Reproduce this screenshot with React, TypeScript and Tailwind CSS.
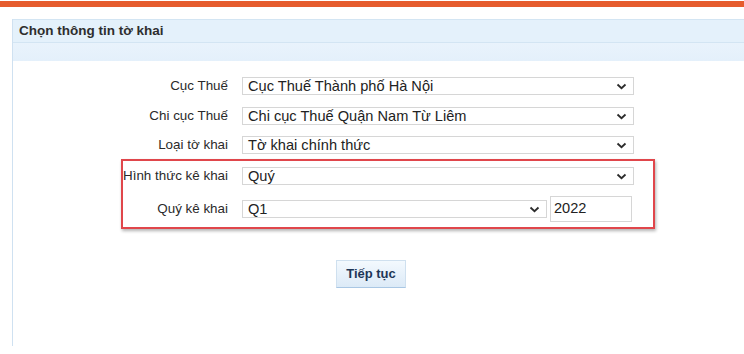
// Tax declaration info picker

function Chevron() {
  return (
    <svg width="11" height="7" viewBox="0 0 11 7" className="shrink-0">
      <polyline points="1.5,1.5 5.5,5.2 9.5,1.5" fill="none" stroke="#2b2b2b" strokeWidth="1.8" />
    </svg>
  );
}

function FakeSelect({ value, width }: { value: string; width: string }) {
  return (
    <div
      className={`${width} h-[18px] flex items-center justify-between pl-[5px] pr-[6px] bg-white border border-[#d6d6d6] text-[14.6px] leading-none text-[#222]`}
    >
      <span>{value}</span>
      <Chevron />
    </div>
  );
}

function Row({ label, children, h = "h-[30px]", labelW = "w-[107px]" }: { label: string; children: React.ReactNode; h?: string; labelW?: string }) {
  return (
    <div className={`flex items-center ${h}`}>
      <div className={`${labelW} text-right text-[13.4px] text-[#2a2a2a] shrink-0 whitespace-nowrap`}>{label}</div>
      <div className="ml-[14px] flex items-center gap-[3px]">{children}</div>
    </div>
  );
}

export default function App() {
  return (
    <div className="w-[744px] h-[354px] bg-white overflow-hidden" style={{ fontFamily: '"Liberation Sans", Arial, sans-serif' }}>
      {/* Top accent bar */}
      <div className="mt-[1px] h-[6px] bg-[#e65c2d]"></div>

      <div className="mt-[12px] ml-[12px] h-[327px] border-l border-[#cfe1f1]">
        {/* Header */}
        <div className="h-[24px] flex items-center pl-[6px] bg-[#e4f1fb] border-t border-b border-[#d3e5f3]">
          <span className="text-[13.5px] font-bold text-[#2e2e2e]">Chọn thông tin tờ khai</span>
        </div>
        <div className="h-[18px] bg-gradient-to-b from-[#e9f3fc] to-[#e4f0fb]"></div>

        {/* Form */}
        <div className="mt-[10px] ml-[108px] w-[534px]">
          <Row label="Cục Thuế">
            <FakeSelect value="Cục Thuế Thành phố Hà Nội" width="w-[392px]" />
          </Row>
          <Row label="Chi cục Thuế">
            <FakeSelect value="Chi cục Thuế Quận Nam Từ Liêm" width="w-[392px]" />
          </Row>
          <Row label="Loại tờ khai" h="h-[28px]">
            <FakeSelect value="Tờ khai chính thức" width="w-[392px]" />
          </Row>

          {/* Highlighted group */}
          <div className="border-2 border-[#e0464b] shadow-[1px_2px_3px_rgba(0,0,0,0.3)]">
            <Row label="Hình thức kê khai" labelW="w-[105px]">
              <FakeSelect value="Quý" width="w-[392px]" />
            </Row>
            <Row label="Quý kê khai" h="h-[36px]" labelW="w-[105px]">
              <FakeSelect value="Q1" width="w-[305px]" />
              <div className="w-[82px] h-[26px] flex items-center pl-[3px] border border-[#d6d6d6] bg-white text-[14.6px] text-[#222]">2022</div>
            </Row>
          </div>
        </div>

        {/* Continue button */}
        <div className="mt-[31px] ml-[323px]">
          <button className="w-[70px] h-[28px] bg-gradient-to-b from-[#f3f9fe] to-[#dceaf7] border border-[#cfe0ef] border-b-[#a9c7e4] text-[13px] font-bold text-[#1d3657]">
            Tiếp tục
          </button>
        </div>
      </div>
    </div>
  );
}
